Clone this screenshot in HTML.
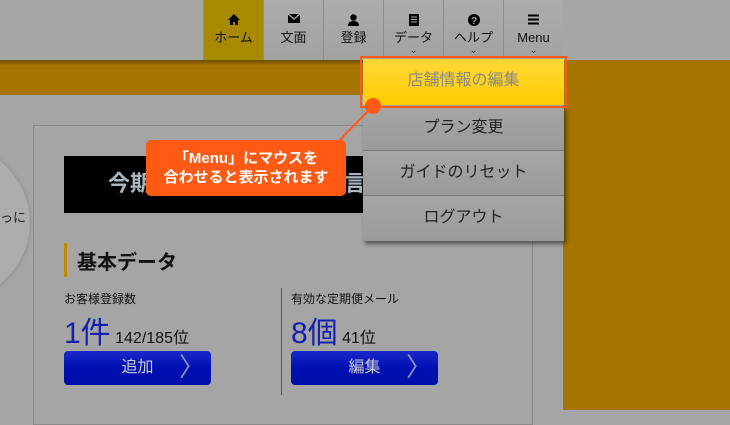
<!DOCTYPE html>
<html><head><meta charset="utf-8"><style>
*{margin:0;padding:0;box-sizing:border-box}
body{width:730px;height:410px;overflow:hidden;background:#a5a5a5;font-family:"Liberation Sans","Noto Sans CJK JP",sans-serif;position:relative}
.abs{position:absolute}
.nav{top:0;height:60px;width:60px;border-left:1px solid #8e8e8e;background:linear-gradient(#acacac,#a2a2a2);text-align:center;font-size:13px;color:#111}
.nav .ic{height:31px;padding-top:14px;display:flex;justify-content:center}
.nav .lb{line-height:14px}
.nav .ch{font-size:9px;line-height:8px;margin-top:1px}
.dd{left:363px;width:201px;height:45px;background:linear-gradient(#a6a6a6,#9a9a9a);border-bottom:1px solid #777;font-size:16px;color:#222;text-align:center;line-height:44px}
</style></head><body>
<div class="abs" style="left:0;top:0;width:730px;height:60px;background:#a6a6a6"></div>
<div class="abs" style="left:0;top:60px;width:730px;height:35px;background:linear-gradient(#6e4d00 0,#8a6000 3px,#a67400 5px)"></div>
<div class="abs" style="left:563px;top:60px;width:167px;height:350px;background:#a67400"></div>
<div class="abs" style="left:-150px;top:140px;width:180px;height:165px;border-radius:50%;background:#adadad;box-shadow:0 0 4px #888"></div>
<div class="abs" style="left:0;top:207px;font-size:13px;color:#222">っに</div>
<div class="abs" style="left:33px;top:125px;width:500px;height:300px;border:1px solid #8a8a8a;background:#a5a5a5"></div>
<div class="abs" style="left:64px;top:156px;width:300px;height:57px;background:#000;color:#a9b6c0;font-size:22px;font-weight:bold;line-height:55px;padding-left:44px">今期<span style="position:absolute;left:280px">言</span></div>
<div class="abs" style="left:64px;top:243px;width:3px;height:34px;background:#c08a00"></div>
<div class="abs" style="left:77px;top:246px;font-size:20px;font-weight:bold;color:#111">基本データ</div>
<div class="abs" style="left:64px;top:290px;font-size:12px;color:#111">お客様登録数</div>
<div class="abs" style="left:64px;top:308px;color:#1520b0;font-size:30px">1件<span style="font-size:16px;color:#111"> 142/185位</span></div>
<div class="abs" style="left:64px;top:351px;width:147px;height:34px;border-radius:4px;background:linear-gradient(#1a28c8,#0010b0 50%,#000ea8);color:#ccd;font-size:16px;text-align:center;line-height:34px">追加<span style="position:absolute;right:6px;font-size:26px;color:#8890d0;top:-1px">〉</span></div>
<div class="abs" style="left:281px;top:288px;width:1px;height:107px;background:#555"></div>
<div class="abs" style="left:291px;top:290px;font-size:12px;color:#111">有効な定期便メール</div>
<div class="abs" style="left:291px;top:308px;color:#1520b0;font-size:30px">8個<span style="font-size:16px;color:#111"> 41位</span></div>
<div class="abs" style="left:291px;top:351px;width:147px;height:34px;border-radius:4px;background:linear-gradient(#1a28c8,#0010b0 50%,#000ea8);color:#ccd;font-size:16px;text-align:center;line-height:34px">編集<span style="position:absolute;right:6px;font-size:26px;color:#8890d0;top:-1px">〉</span></div>
<!-- nav -->
<div class="abs nav" style="left:203px;background:#a88a00"><div class="ic"><svg width="12" height="11" viewBox="0 0 12 11"><path d="M6 0L0 6h2v5h3V8h2v3h3V6h2z" fill="#000"/></svg></div><div class="lb">ホーム</div></div>
<div class="abs nav" style="left:263px"><div class="ic"><svg width="12" height="9" viewBox="0 0 12 9"><rect width="12" height="9" fill="#000"/><path d="M0 0L6 5L12 0" stroke="#aaa" stroke-width="1.3" fill="none"/></svg></div><div class="lb">文面</div></div>
<div class="abs nav" style="left:323px"><div class="ic"><svg width="11" height="12" viewBox="0 0 11 12"><circle cx="5.5" cy="3.5" r="3.2" fill="#000"/><path d="M0 12Q0 7 5.5 7Q11 7 11 12z" fill="#000"/></svg></div><div class="lb">登録</div></div>
<div class="abs nav" style="left:383px"><div class="ic"><svg width="10" height="12" viewBox="0 0 10 12"><rect width="10" height="12" fill="#000"/><path d="M2 3h6M2 5.5h6M2 8h6" stroke="#aaa"/></svg></div><div class="lb">データ</div><div class="ch">⌄</div></div>
<div class="abs nav" style="left:443px"><div class="ic"><svg width="12" height="12" viewBox="0 0 12 12"><circle cx="6" cy="6" r="6" fill="#000"/><text x="6" y="10" font-size="10" font-weight="bold" text-anchor="middle" fill="#aaa" font-family="Liberation Sans">?</text></svg></div><div class="lb">ヘルプ</div><div class="ch">⌄</div></div>
<div class="abs nav" style="left:503px"><div class="ic"><svg width="11" height="11" viewBox="0 0 11 11"><path d="M0 1.5h11M0 5.5h11M0 9.5h11" stroke="#000" stroke-width="2"/></svg></div><div class="lb">Menu</div><div class="ch">⌄</div></div>
<!-- dropdown -->
<div class="abs" style="left:363px;top:106px;width:201px;height:135px;box-shadow:2px 3px 4px rgba(0,0,0,.5)"></div>
<div class="abs dd" style="top:106px">プラン変更</div>
<div class="abs dd" style="top:151px">ガイドのリセット</div>
<div class="abs dd" style="top:196px;border-bottom:none">ログアウト</div>
<div class="abs" style="left:360px;top:56px;width:207px;height:52px;border:2px solid #ff5a14;padding:1px"><div style="width:100%;height:100%;background:linear-gradient(#ffd838,#ffcc00);color:#888;font-size:16px;text-align:center;line-height:44px">店舗情報の編集</div></div>
<svg class="abs" style="left:0;top:0" width="730" height="410"><line x1="335" y1="145" x2="373" y2="106" stroke="#ff5a14" stroke-width="2"/><circle cx="373" cy="106" r="8" fill="#ff5a14"/></svg>
<div class="abs" style="left:146px;top:140px;width:200px;height:56px;background:#ff5a14;border-radius:5px;color:#fff;font-size:15px;font-weight:bold;line-height:19px;padding-top:9px;text-align:center">「Menu」にマウスを<br>合わせると表示されます</div>
</body></html>
